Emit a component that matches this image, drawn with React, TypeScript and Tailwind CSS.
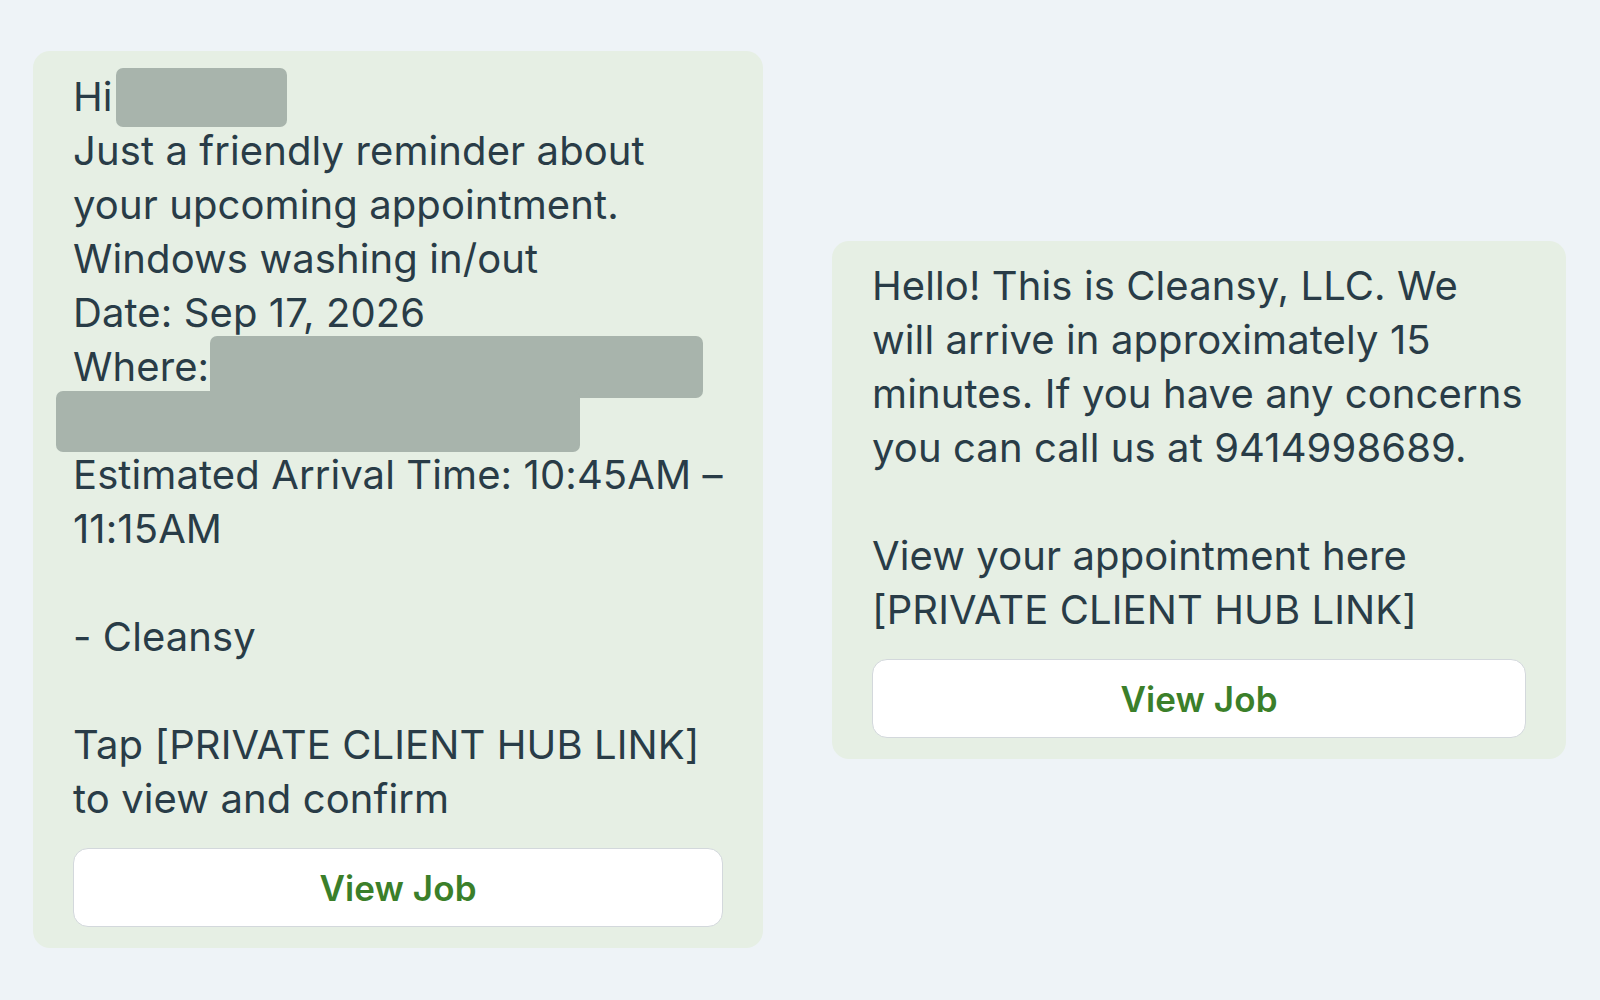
const Redact = ({ className }: { className: string }) => (
  <span className={`inline-block shrink-0 rounded-[7px] bg-[#a8b4ac] ${className}`} />
);

function ViewJobButton() {
  return (
    <button className="mt-[22px] flex h-[79px] w-full items-center justify-center rounded-[15px] border border-[#d3d8dc] bg-white text-[35px] font-semibold text-[#3b7f2a]">
      View Job
    </button>
  );
}

export default function App() {
  return (
    <div
      className="flex h-[1000px] w-[1600px] items-start gap-[69px] bg-[#eef3f7] pl-[33px] pt-[51px] text-[#293c47]"
      style={{ fontFamily: 'Inter, "Noto Sans", sans-serif' }}
    >
      {/* reminder message */}
      <div className="w-[730px] whitespace-nowrap rounded-[17px] bg-[#e6efe4] px-[40px] pt-[19px] pb-[21px] text-[40px] leading-[54px] tracking-[0.1px]">
        <div className="flex h-[54px] items-center">
          <span>Hi</span>
          <Redact className="ml-[3px] h-[59px] w-[171px]" />
        </div>
        <div>Just a friendly reminder about</div>
        <div>your upcoming appointment.</div>
        <div>Windows washing in/out</div>
        <div>Date: Sep 17, 2026</div>
        <div className="flex h-[54px] items-center">
          <span>Where:</span>
          <Redact className="ml-[1px] h-[62px] w-[493px]" />
        </div>
        <div className="-ml-[17px] flex h-[54px] items-center">
          <Redact className="h-[61px] w-[524px]" />
        </div>
        <div>Estimated Arrival Time: 10:45AM –</div>
        <div>11:15AM</div>
        <div className="h-[54px]" />
        <div>- Cleansy</div>
        <div className="h-[54px]" />
        <div>Tap [PRIVATE CLIENT HUB LINK]</div>
        <div>to view and confirm</div>
        <ViewJobButton />
      </div>

      {/* arrival message */}
      <div className="mt-[190px] w-[734px] whitespace-nowrap rounded-[17px] bg-[#e6efe4] px-[40px] pt-[18px] pb-[21px] text-[40px] leading-[54px] tracking-[0.1px]">
        <div>Hello! This is Cleansy, LLC. We</div>
        <div>will arrive in approximately 15</div>
        <div>minutes. If you have any concerns</div>
        <div>you can call us at 9414998689.</div>
        <div className="h-[54px]" />
        <div>View your appointment here</div>
        <div>[PRIVATE CLIENT HUB LINK]</div>
        <ViewJobButton />
      </div>
    </div>
  );
}
